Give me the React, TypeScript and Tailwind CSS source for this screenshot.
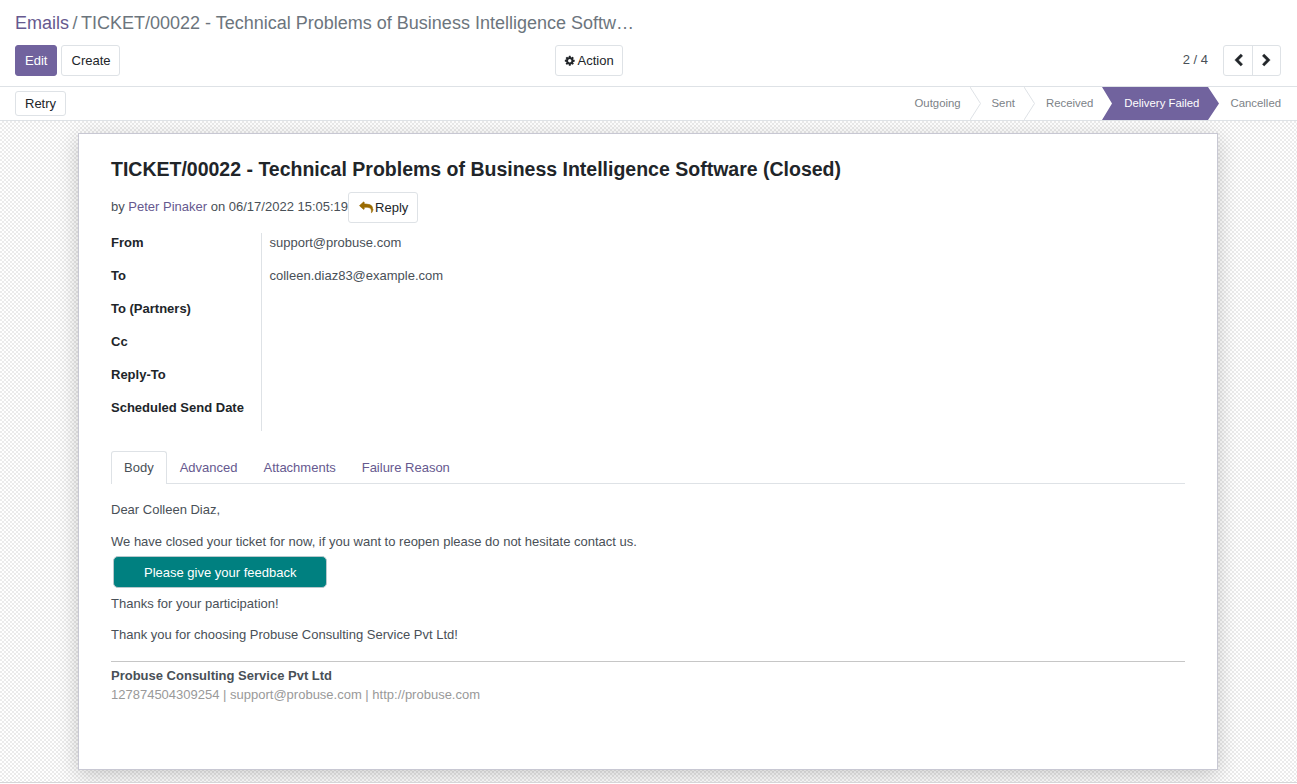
import React from 'react';

const ICONS = {
  cog: 'M1152 896q0-106-75-181t-181-75-181 75-75 181 75 181 181 75 181-75 75-181zm512-109v222q0 12-8 23t-20 13l-185 28q-19 54-39 91 35 50 107 138 10 12 10 25t-9 23q-27 37-99 108t-94 71q-12 0-26-9l-138-108q-44 23-91 38-16 136-29 186-7 28-36 28h-222q-14 0-24.5-8.5t-11.5-21.5l-28-184q-49-16-90-37l-141 107q-10 9-25 9-14 0-25-11-126-114-165-168-7-10-7-23 0-12 8-23 15-21 51-66.5t54-70.5q-27-50-41-99l-183-27q-13-2-21-12.5t-8-23.5v-222q0-12 8-23t19-13l186-28q14-46 39-92-40-57-107-138-10-12-10-24 0-10 9-23 26-36 98.5-107.5t94.5-71.5q13 0 26 10l138 107q44-23 91-38 16-136 29-186 7-28 36-28h222q14 0 24.5 8.5t11.5 21.5l28 184q49 16 90 37l142-107q9-9 24-9 13 0 25 10 129 119 165 170 7 8 7 22 0 12-8 23-15 21-51 66.5t-54 70.5q26 50 41 98l183 28q13 2 21 12.5t8 23.5z',
  left: 'M1427 301l-531 531 531 531q19 19 19 45t-19 45l-166 166q-19 19-45 19t-45-19l-742-742q-19-19-19-45t19-45l742-742q19-19 45-19t45 19l166 166q19 19 19 45t-19 45z',
  right: 'M1363 877l-742 742q-19 19-45 19t-45-19l-166-166q-19-19-19-45t19-45l531-531-531-531q-19-19-19-45t19-45l166-166q19-19 45-19t45 19l742 742q19 19 19 45t-19 45z',
  reply: 'M1792 1120q0 166-127 451-3 7-10.5 24t-13.5 30-13 22q-12 17-28 17-15 0-23.5-10t-8.5-25q0-9 2.5-26.5t2.5-23.5q5-68 5-123 0-112-19.5-200.5t-54-153.5-89-112-117-79-143.5-49-165.5-26-184.5-8h-224v256q0 26-19 45t-45 19-45-19l-512-512q-19-19-19-45t19-45l512-512q19-19 45-19t45 19 19 45v256h224q713 0 875 403 53 134 53 333z',
};

const STROKES = { cog: 0, left: 60, right: 60, reply: 90 };

function Icon({ name, className }: { name: keyof typeof ICONS; className: string }) {
  return (
    <svg
      viewBox="0 0 1792 1792"
      preserveAspectRatio="none"
      fill="currentColor"
      stroke="currentColor"
      strokeWidth={STROKES[name]}
      className={`shrink-0 overflow-visible ${className}`}
    >
      <path d={ICONS[name]} />
    </svg>
  );
}

function Button({ children, className = '' }: { children: React.ReactNode; className?: string }) {
  return (
    <button
      type="button"
      className={`flex shrink-0 items-center rounded-[3px] border whitespace-nowrap ${className}`}
    >
      {children}
    </button>
  );
}

function Separator() {
  return (
    <svg width="11" height="33" viewBox="0 0 11 33" fill="none" stroke="#dee2e6" className="shrink-0">
      <path d="M0 0L10.5 16.5L0 33" />
    </svg>
  );
}

const FIELDS = [
  ['From', 'support@probuse.com'],
  ['To', 'colleen.diaz83@example.com'],
  ['To (Partners)', ''],
  ['Cc', ''],
  ['Reply-To', ''],
  ['Scheduled Send Date', ''],
];

export default function App() {
  return (
    <div className="flex h-[784px] w-[1297px] flex-col overflow-hidden bg-white font-['Liberation_Sans',Arial,sans-serif] text-[13px] leading-[19.5px] text-[#495057]">
      <header className="h-[87px] shrink-0 border-b border-[#dee2e6] px-[15px] pt-[10px]">
        <nav className="flex h-[27px] items-center text-[18px] leading-[27px] whitespace-pre text-[#6c757d]">
          <a className="text-[#66598f]">Emails</a>
          <span className="pl-[3.5px]">/</span>
          <span className="pl-[3.5px]">TICKET/00022 - Technical Problems of Business Intelligence Softw…</span>
        </nav>
        <div className="mt-[8px] flex h-[31px]">
          <div className="flex w-[540px] gap-1">
            <Button className="w-[42px] border-[#71639e] bg-[#71639e] pl-[9px] text-white">Edit</Button>
            <Button className="w-[59px] border-[#dee2e6] pl-[9.5px] text-[#212529]">Create</Button>
          </div>
          <Button className="w-[68px] gap-[2px] border-[#dee2e6] pl-[8px] text-[#212529]">
            <Icon name="cog" className="size-[11.5px]" />
            Action
          </Button>
          <div className="ml-auto flex items-center">
            <span className="mr-[15px] pb-[2px]">2 / 4</span>
            <div className="mr-px flex h-[31px] w-[58px] rounded-[3px] border border-[#dee2e6] text-[#212529]">
              <button type="button" className="flex w-[29px] items-center justify-center border-r border-[#dee2e6]">
                <Icon name="left" className="size-[13px]" />
              </button>
              <button type="button" className="flex flex-1 items-center justify-center">
                <Icon name="right" className="size-[13px]" />
              </button>
            </div>
          </div>
        </div>
      </header>

      <div className="flex h-[34px] shrink-0 items-center justify-between border-b border-[#dee2e6] pl-[15px]">
        <Button className="h-[25px] w-[51px] border-[#dee2e6] pl-[9px] text-[#212529]">Retry</Button>
        <ol className="flex h-[33px] items-center text-[11.375px] whitespace-nowrap text-[#7c8287]">
          <li className="w-[56px] pl-[0.5px]">Outgoing</li>
          <Separator />
          <li className="w-[43px] pl-[10.5px]">Sent</li>
          <Separator />
          <li className="w-[67px] pl-[11px]">Received</li>
          <li className="flex h-[33px] w-[117px] items-center bg-[#71639e] pl-[22.3px] text-white [clip-path:polygon(0_0,106px_0,100%_50%,106px_100%,0_100%,10px_50%)]">
            Delivery Failed
          </li>
          <li className="w-[78px] pl-[11.5px]">Cancelled</li>
        </ol>
      </div>

      <main className="h-[662px] shrink-0 overflow-hidden border-b border-[#d6d6d8] bg-[repeating-conic-gradient(#ebebeb_0%_25%,#ffffff_0%_50%)] bg-[length:4px_4px] pt-3 pl-[78px]">
        <section className="h-[637px] w-[1140px] border border-[#c8c8d3] bg-white px-8 pt-[22px] shadow-[0_5px_20px_rgba(0,0,0,0.2)]">
          <h2 className="text-[19.5px] leading-[26px] font-bold text-[#212529]">
            TICKET/00022 - Technical Problems of Business Intelligence Software (Closed)
          </h2>
          <div className="mt-[10px] flex h-[31px] whitespace-pre">
            <span className="pt-[5px]">
              by <a className="text-[#66598f]">Peter Pinaker</a> on 06/17/2022 15:05:19
            </span>
            <Button className="w-[70px] border-[#dee2e6] pl-[11px] text-[#212529]">
              <Icon name="reply" className="mr-[2px] h-[11.5px] w-[13px] text-[#9a6b01]" />
              Reply
            </Button>
          </div>

          <dl className="mt-[10px] flex flex-col">
            {FIELDS.map(([label, value]) => (
              <div key={label} className="flex h-[33px]">
                <dt className="w-[151px] border-r border-[#dee2e6] font-bold text-[#212529]">{label}</dt>
                <dd className="pl-[7.5px]">{value}</dd>
              </div>
            ))}
          </dl>

          <div className="mt-5 flex h-[33px] border-b border-[#dee2e6] text-[#66598f]">
            <div className="h-[33px] w-[56px] rounded-t-[3px] border border-b-0 border-[#dee2e6] bg-white pt-[6px] pl-3 text-[#495057]">
              Body
            </div>
            <div className="w-[84px] pt-[7px] pl-[12.7px]">Advanced</div>
            <div className="w-[98px] pt-[7px] pl-[12.5px]">Attachments</div>
            <div className="pt-[7px] pl-[12.7px]">Failure Reason</div>
          </div>

          <div className="pt-4">
            <p>Dear Colleen Diaz,</p>
            <p className="mt-[12.5px]">
              We have closed your ticket for now, if you want to reopen please do not hesitate contact us.
            </p>
            <a className="mt-[4px] ml-[2px] flex h-[32px] w-[214px] items-center rounded-[5px] border border-[#b8c8cc] bg-[#008080] pt-[2.5px] pl-[30px] text-white">
              Please give your feedback
            </a>
            <p className="mt-[6px]">Thanks for your participation!</p>
            <p className="mt-[11.5px]">Thank you for choosing Probuse Consulting Service Pvt Ltd!</p>
          </div>
          <footer className="mt-[17px] border-t border-[#c6c6c6] pt-1 text-[#999999]">
            <p className="font-bold text-[#495057]">Probuse Consulting Service Pvt Ltd</p>
            <p className="-mt-[0.75px]">127874504309254 | support@probuse.com | http://probuse.com</p>
          </footer>
        </section>
      </main>
    </div>
  );
}
